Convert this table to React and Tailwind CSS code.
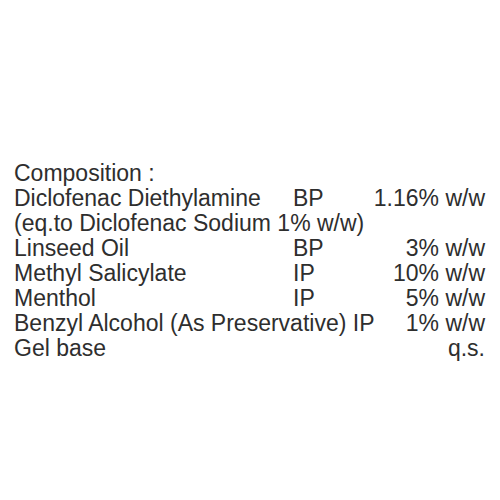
const rows = [
  { name: "Diclofenac Diethylamine", grade: "BP", amount: "1.16% w/w" },
  { full: "(eq.to Diclofenac Sodium 1% w/w)" },
  { name: "Linseed Oil", grade: "BP", amount: "3% w/w" },
  { name: "Methyl Salicylate", grade: "IP", amount: "10% w/w" },
  { name: "Menthol", grade: "IP", amount: "5% w/w" },
  { full: "Benzyl Alcohol (As Preservative) IP", amount: "1% w/w" },
  { name: "Gel base", grade: "", amount: "q.s." },
]

export default function App() {
  return (
    <div className="w-[500px] h-[500px] bg-white pt-[161px] pl-[14px] pr-[15px] text-[#2e2e2e] text-[23px] leading-[25px] font-['Liberation_Sans',Arial,sans-serif]">
      <p>Composition :</p>
      {rows.map((r, i) => (
        <div key={i} className="flex whitespace-nowrap">
          {r.full ? (
            <span>{r.full}</span>
          ) : (
            <>
              <span className="w-[279px]">{r.name}</span>
              <span>{r.grade}</span>
            </>
          )}
          <span className="ml-auto">{r.amount}</span>
        </div>
      ))}
    </div>
  )
}
